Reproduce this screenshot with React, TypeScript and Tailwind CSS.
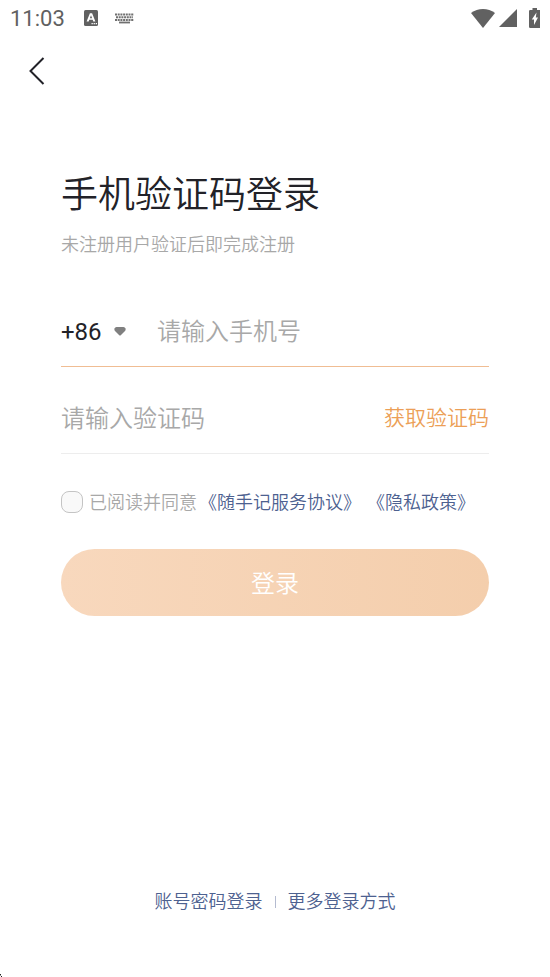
import React, { useState } from "react";

function StatusBar() {
  return (
    <div className="flex h-9 items-center px-[10px] text-[#616161]">
      <span className="w-[74px] pt-[2px] text-[22px] leading-9">11:03</span>
      <svg width="14" height="16" viewBox="0 0 14 16" aria-hidden="true">
        <rect width="14" height="16" rx="1.5" fill="#616161" />
        <path d="M2.600 11.500 5.900 3.200h2.200l3.300 8.300H9.300l-.6-1.700H5.300l-.6 1.700zM5.900 8.200h2.200L7 5.200z" fill="#fff" fillRule="evenodd" />
        <path d="M7.500 13h1.300v1.300H7.500zM9.600 13h1.300v1.300H9.600zM11.700 13H13v1.300h-1.300z" fill="#fff" />
      </svg>
      <svg className="ml-[17px]" width="19" height="11" viewBox="0 0 19 11" aria-hidden="true">
        <path d="M0 1.500h19M1 4.300h17M0 7h19" stroke="#707070" strokeWidth="2" strokeDasharray="2 0.700" />
        <path d="M4 9.500h11" stroke="#707070" strokeWidth="1.800" />
      </svg>
      <div className="ml-auto flex items-center">
        <svg width="24" height="19" viewBox="0 0 24 19" aria-hidden="true">
          <path d="M0 4C7-1.300 17-1.300 24 4L12 19z" fill="currentColor" />
        </svg>
        <svg className="ml-1" width="18" height="18" viewBox="0 0 18 18" aria-hidden="true">
          <path d="M18 0v18H0z" fill="currentColor" />
        </svg>
        <svg className="ml-3" width="11" height="20" viewBox="0 0 11 20" aria-hidden="true">
          <path d="M3.500 0H8v2h3v18H1.200Q0 20 0 18.800V3.200Q0 2 1.200 2h2.300z" fill="currentColor" />
          <path d="M7.500 4.500 2.800 11.500H5V17l4-7.500H6.800z" fill="#fff" />
        </svg>
      </div>
    </div>
  );
}

export default function App() {
  const [phone, setPhone] = useState("");
  const [code, setCode] = useState("");
  const [agreed, setAgreed] = useState(false);

  return (
    <div className="relative flex min-h-screen flex-col bg-white font-[Roboto,'Noto_Sans_CJK_SC',sans-serif] text-[#222228]">
      <StatusBar />

      <header className="flex h-[70px] items-center px-[26px]">
        <button type="button" aria-label="返回" className="flex h-8 w-6 items-center">
          <svg width="20" height="28" viewBox="0 0 20 28" fill="none" aria-hidden="true">
            <path d="M17.500 1 4.500 14l13 13" stroke="#222228" strokeWidth="2" />
          </svg>
        </button>
      </header>

      <main className="flex flex-col px-[61px] pt-16 font-[350]">
        <h1 className="text-[37px] leading-[52px]">手机验证码登录</h1>
        <p className="mt-[9px] text-[18px] leading-7 text-[#a8a8a8]">未注册用户验证后即完成注册</p>

        <form className="mt-[37px] flex flex-col" onSubmit={(e) => e.preventDefault()}>
          <div className="flex h-[71px] items-center border-b border-[#f0bd93] pt-[2px]">
            <button type="button" aria-label="选择国家或地区" className="flex w-24 items-center text-2xl font-normal">
              +86
              <svg className="ml-3" width="12" height="10" viewBox="0 0 12 10" aria-hidden="true">
                <path d="M2.500 0h7q1.500 0 2 1.500Q12 3 11 4L7 8Q6 9 5 8L1 4Q0 3 .5 1.500 1 0 2.500 0z" fill="#808080" />
              </svg>
            </button>
            <input
              type="tel"
              aria-label="手机号"
              placeholder="请输入手机号"
              value={phone}
              onChange={(e) => setPhone(e.target.value)}
              className="min-w-0 flex-1 bg-transparent text-2xl outline-none placeholder:text-[#a8a8a8]"
            />
          </div>

          <div className="mt-4 flex h-[71px] items-center border-b border-[#ededed] pt-[2px]">
            <input
              type="text"
              aria-label="验证码"
              placeholder="请输入验证码"
              value={code}
              onChange={(e) => setCode(e.target.value)}
              className="min-w-0 flex-1 bg-transparent text-2xl outline-none placeholder:text-[#a8a8a8]"
            />
            <button type="button" className="text-[21px] text-[#ec9f57]">
              获取验证码
            </button>
          </div>

          <div className="mt-[34px] flex h-7 items-center whitespace-nowrap text-[18px] text-[#a8a8a8]">
            <input
              id="agree"
              type="checkbox"
              checked={agreed}
              onChange={(e) => setAgreed(e.target.checked)}
              className="size-[22px] shrink-0 appearance-none rounded-lg border border-[#c4c4c4] bg-[#f9f9f9] checked:bg-[#ec9f57]"
            />
            <label htmlFor="agree" className="ml-[6px]">
              已阅读并同意
            </label>
            <a href="#service" className="ml-[2px] text-[#4d6190]">
              《随手记服务协议》
            </a>
            <a href="#privacy" className="ml-[6px] text-[#4d6190]">
              《隐私政策》
            </a>
          </div>

          <button
            type="submit"
            className="mt-[33px] h-[67px] rounded-full bg-linear-to-r from-[#f8d8bd] to-[#f4ceac] pt-[2px] text-2xl text-white"
          >
            登录
          </button>
        </form>
      </main>

      <footer className="mt-auto flex items-center justify-center pb-[61px] text-[18px] leading-7 font-[350] text-[#4d6190]">
        <a href="#password">账号密码登录</a>
        <span className="mx-3 h-3 w-px bg-[#b4bbd0]" />
        <a href="#more">更多登录方式</a>
      </footer>

      <svg className="absolute bottom-0 left-0" width="3" height="3" viewBox="0 0 3 3" aria-hidden="true">
        <path d="M0 0h1v1H0zM1 2h1v1H1z" fill="#222" />
        <path d="M0 1h1v1H0z" fill="#999" />
      </svg>
    </div>
  );
}
